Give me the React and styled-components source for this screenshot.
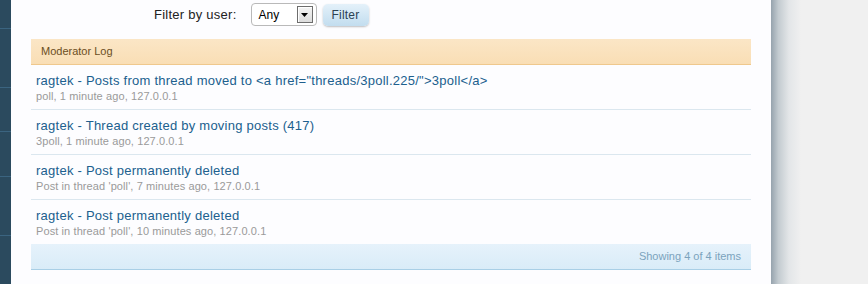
import React from 'react';
import styled, {createGlobalStyle} from "styled-components";

const entries = [
    {title: 'ragtek - Posts from thread moved to <a href="threads/3poll.225/">3poll</a>', meta: 'poll, 1 minute ago, 127.0.0.1'},
    {title: 'ragtek - Thread created by moving posts (417)', meta: '3poll, 1 minute ago, 127.0.0.1'},
    {title: 'ragtek - Post permanently deleted', meta: "Post in thread 'poll', 7 minutes ago, 127.0.0.1"},
    {title: 'ragtek - Post permanently deleted', meta: "Post in thread 'poll', 10 minutes ago, 127.0.0.1"},
];

const navHeights = [29, 59, 44, 45, 59];

function App() {
    return (
        <>
            <GlobalStyle/>
            <Page>
                <Sidebar>
                    {navHeights.map((h, i) => (
                        <NavItem key={i} $height={h}/>
                    ))}
                </Sidebar>
                <Content>
                    <FilterForm>
                        <FilterLabel>Filter by user:</FilterLabel>
                        <Select>
                            <span>Any</span>
                            <SelectArrow>
                                <svg width="7" height="4" viewBox="0 0 7 4">
                                    <path d="M0 0h7L3.5 4z" fill="#000"/>
                                </svg>
                            </SelectArrow>
                        </Select>
                        <FilterButton>Filter</FilterButton>
                    </FilterForm>
                    <Log>
                        <LogHeader>Moderator Log</LogHeader>
                        {entries.map((e, i) => (
                            <LogRow key={i}>
                                <LogTitle href="#">{e.title}</LogTitle>
                                <LogMeta>{e.meta}</LogMeta>
                            </LogRow>
                        ))}
                        <LogFooter>Showing 4 of 4 items</LogFooter>
                    </Log>
                </Content>
                <Shadow/>
            </Page>
        </>
    );
}

const GlobalStyle = createGlobalStyle`
  html, body {
    margin: 0;
    padding: 0;
    background: #f0f0f0;
    font-family: "Liberation Sans", Arial, sans-serif;
  }
`

const Page = styled.div`
  display: flex;
  height: 284px;
  overflow: hidden;
  background: #f0f0f0;
`

const Sidebar = styled.div`
  width: 11px;
  flex-shrink: 0;
  background: #2b4a5e;
  display: flex;
  flex-direction: column;
`

const NavItem = styled.div`
  height: ${props => props.$height - 1}px;
  border-bottom: 1px solid #3b6480;
`

const Content = styled.div`
  width: 720px;
  flex-shrink: 0;
  background: #fdfdff;
  padding: 3px 20px 0 20px;
`

const Shadow = styled.div`
  width: 30px;
  flex-shrink: 0;
  background: linear-gradient(to right, #96a3ad 0%, #c3cbd0 25%, #e3e6e8 60%, #f0f0f0 100%);
`

const FilterForm = styled.form`
  display: flex;
  align-items: center;
  height: 23px;
  padding-left: 123px;
  margin: 0;
`

const FilterLabel = styled.span`
  font-size: 13px;
  letter-spacing: 0.25px;
  color: #222;
  margin-right: 14px;
`

const Select = styled.div`
  box-sizing: border-box;
  width: 66px;
  height: 23px;
  border: 1px solid #b9b9b9;
  border-radius: 4px;
  background: #fff;
  display: flex;
  align-items: center;
  justify-content: space-between;
  padding: 0 3px 0 7px;
  font-size: 12px;
  color: #000;
`

const SelectArrow = styled.div`
  box-sizing: border-box;
  width: 16px;
  height: 17px;
  border: 1px solid #6d6d6d;
  background: linear-gradient(#f4f4f4, #dcdcdc);
  box-shadow: inset 1px 1px 0 #fff;
  display: flex;
  align-items: center;
  justify-content: center;
`

const FilterButton = styled.button`
  margin-left: 6px;
  height: 22px;
  width: 46px;
  padding: 0;
  border: none;
  border-radius: 5px;
  background: linear-gradient(#e4f1fa, #c2ddef);
  box-shadow: 0 1px 2px rgba(0, 0, 0, 0.25);
  font-family: "Liberation Sans", Arial, sans-serif;
  font-size: 12px;
  letter-spacing: 0.2px;
  color: #2b4152;
`

const Log = styled.div`
  margin-top: 13px;
`

const LogHeader = styled.div`
  height: 25px;
  line-height: 25px;
  padding-left: 10px;
  background: linear-gradient(#fbe6c6, #f9deb5);
  border-bottom: 1px solid #efc88d;
  font-size: 11px;
  color: #6b4e23;
`

const LogRow = styled.div`
  height: 44px;
  padding: 0 5px;
  border-bottom: 1px solid #dbe7ef;
  display: flex;
  flex-direction: column;
  justify-content: center;
  gap: 2px;
  &:nth-last-child(2) {
    border-bottom: none;
  }
`

const LogTitle = styled.a`
  font-size: 13px;
  letter-spacing: 0.25px;
  color: #20608e;
  text-decoration: none;
  white-space: nowrap;
`

const LogMeta = styled.div`
  font-size: 11px;
  letter-spacing: 0.1px;
  color: #9a9a9a;
`

const LogFooter = styled.div`
  height: 25px;
  line-height: 25px;
  padding-right: 10px;
  text-align: right;
  background: linear-gradient(#e6f2fb, #d9ecf8);
  border-bottom: 1px solid #a9cfe6;
  font-size: 11px;
  color: #7ba3bd;
`

export default App;
